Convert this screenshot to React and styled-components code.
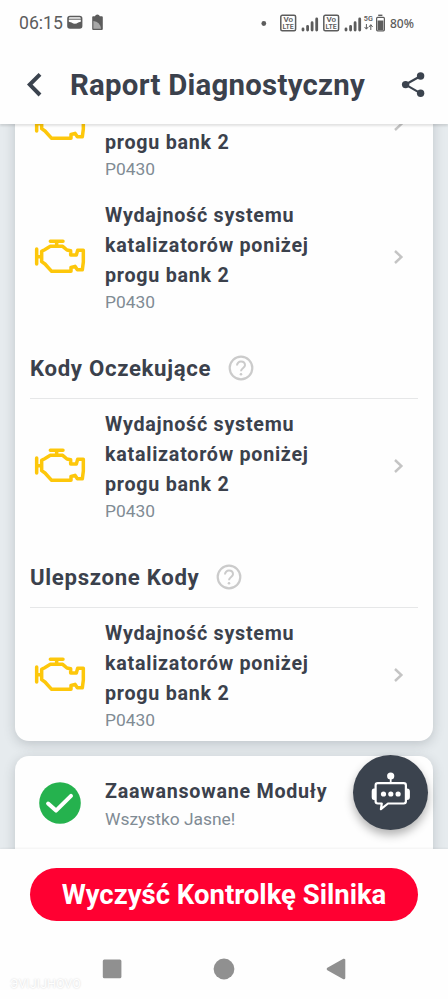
import React from 'react';
import styled, { createGlobalStyle } from 'styled-components';

const GlobalStyle = createGlobalStyle`
  * {
    box-sizing: border-box;
  }

  body {
    margin: 0;
    font-family: Roboto, "Liberation Sans", sans-serif;
    color: #3b414c;
    background: #ffffff;
  }
`;

const Screen = styled.div`
  display: flex;
  flex-direction: column;
  width: 448px;
  height: 999px;
  overflow: hidden;
  background: #fefefe;
`;

const StatusBar = styled.div`
  display: flex;
  align-items: center;
  flex: none;
  height: 46px;
  padding-left: 19px;
  color: #5c5c5c;
`;

const Clock = styled.span`
  width: 48px;
  font-size: 17.6px;
  line-height: 20px;
  padding-bottom: 1px;
`;

const StatusIcons = styled.svg`
  display: block;
  flex: none;
`;

const BatteryLevel = styled.span`
  margin-left: 4px;
  padding-top: 2px;
  font: 500 12px/16px "Noto Sans", sans-serif;
`;

const Header = styled.header`
  position: relative;
  z-index: 1;
  display: flex;
  align-items: center;
  flex: none;
  height: 78px;
  background: #fefefe;
  box-shadow: 0 2px 2px rgba(0, 0, 0, 0.11);
`;

const HeaderButton = styled.button`
  display: flex;
  justify-content: center;
  width: 70px;
  padding: 0;
  border: 0;
  background: none;
`;

const Title = styled.h1`
  flex: 1;
  margin: 0;
  font-size: 29.4px;
  font-weight: 700;
  line-height: 38px;
  letter-spacing: 0.25px;
  white-space: nowrap;
`;

const Content = styled.main`
  display: flex;
  flex-direction: column;
  gap: 15px;
  flex: none;
  height: 725px;
  padding: 0 15px;
  overflow: hidden;
  background: #e6ebee;
`;

const Card = styled.section`
  flex: none;
  margin-top: ${(props) => props.$scrolled ?? 0}px;
  padding: 0 15px ${(props) => props.$bottom ?? 0}px;
  border-radius: 14px;
  background: #fefefe;
  box-shadow: 0 3px 12px rgba(50, 60, 70, 0.22);
`;

const SectionHead = styled.div`
  display: flex;
  align-items: center;
  gap: 17px;
  height: 76px;
  padding-top: 15px;
  border-bottom: 1px solid #e6e7e8;
`;

const SectionTitle = styled.h2`
  margin: 0;
  font-size: 22.2px;
  font-weight: 700;
  line-height: 29px;
  letter-spacing: 0.68px;
`;

const Row = styled.div`
  display: flex;
  align-items: center;
  height: ${(props) => props.$height ?? 133}px;
`;

const RowIcon = styled.div`
  display: flex;
  justify-content: center;
  width: 59px;
  margin-right: 16px;
  padding-bottom: ${(props) => props.$bottom ?? 0}px;
`;

const RowBody = styled.div`
  flex: 1;
`;

const RowTitle = styled.div`
  max-width: 250px;
  font-size: 19.7px;
  font-weight: 700;
  line-height: 30px;
  letter-spacing: 0.74px;
`;

const RowNote = styled.div`
  color: #808b94;
  font-size: 17.4px;
  line-height: ${(props) => props.$line ?? 25}px;
`;

const RowArrow = styled.div`
  display: flex;
  width: 26px;
`;

const ChatButton = styled.button`
  position: absolute;
  z-index: 2;
  left: 353px;
  top: 755px;
  width: 75px;
  height: 75px;
  padding: 0;
  border: 0;
  border-radius: 50%;
  background: #3b434e;
  box-shadow: 0 5px 10px rgba(0, 0, 0, 0.3);
`;

const Footer = styled.footer`
  position: relative;
  z-index: 1;
  flex: none;
  height: 90px;
  padding: 19px 30px 0;
  background: #fefefe;
  box-shadow: 0 -1px 2px rgba(0, 0, 0, 0.05);
`;

const ClearButton = styled.button`
  display: block;
  width: 100%;
  height: 53px;
  padding: 0;
  border: 0;
  border-radius: 27px;
  color: #ffffff;
  background: #ff0032;
  font: 700 27.5px/52px Roboto, sans-serif;
  white-space: nowrap;
`;

const NavBar = styled.nav`
  position: relative;
  display: flex;
  justify-content: center;
  flex: none;
  height: 60px;
  padding-top: 18px;
`;

const Watermark = styled.span`
  position: absolute;
  left: 10px;
  top: 38px;
  color: #ffffff;
  font-size: 12px;
  line-height: 14px;
  letter-spacing: 0.3px;
  text-shadow: 0 0 2px rgba(0, 0, 0, 0.2);
`;

const EngineIcon = () => (
  <svg
    width="52"
    height="36"
    viewBox="102 147 156 108"
    fill="none"
    stroke="#fdc70b"
    strokeWidth="10.5"
    strokeLinecap="round"
    strokeLinejoin="round"
  >
    <path d="M151 154H189M170 155V168" />
    <path d="M110 177V222M111 200H123" />
    <path d="M125 184L134 179L151 169H188L201 180L212 182V195H229L233 181L250 181V216L247 239H232L225 229L213 232V244H155L135 222L125 215Z" />
  </svg>
);

const ArrowIcon = () => (
  <svg width="12" height="16" viewBox="0 0 12 16" fill="none" stroke="#c4c4c4" strokeWidth="2.4">
    <path d="M3 2L9.4 8L3 14" />
  </svg>
);

const HelpIcon = () => (
  <svg width="26" height="26" viewBox="0 0 26 26" fill="none" stroke="#cbcbcb" strokeWidth="2.2">
    <circle cx="13" cy="13" r="11.3" />
    <path d="M9 10.6C9 8.1 10.7 6.6 13 6.6S17 8.1 17 10.3C17 12.8 13 13.2 13 16.2" strokeWidth="2" />
    <circle cx="13" cy="19.2" r="1.3" fill="#cbcbcb" stroke="none" />
  </svg>
);

const CheckIcon = () => (
  <svg width="42" height="42" viewBox="0 0 42 42">
    <circle cx="21" cy="21" r="20.8" fill="#25b24e" />
    <path
      d="M9.1 21.6L17 28.6L32 13.8"
      fill="none"
      stroke="#ffffff"
      strokeWidth="4"
      strokeLinecap="round"
      strokeLinejoin="round"
    />
  </svg>
);

const BotIcon = () => (
  <svg width="75" height="75" viewBox="-0.5 0 75 75" fill="none" stroke="#ffffff">
    <circle cx="37.2" cy="21" r="3.6" fill="#ffffff" stroke="none" />
    <path d="M37.2 23V29" strokeWidth="1.8" />
    <path d="M22 33.5H20.5Q18.2 33.5 18.2 36.5V42Q18.2 45 20.5 45H22ZM52 33.5H53.5Q56.4 33.5 56.4 36.5V42Q56.4 45 53.5 45H52Z" fill="#ffffff" stroke="none" />
    <path
      d="M24.3 28.2H50.2Q52.4 28.2 52.4 30.4V46.3Q52.4 48.5 50.2 48.5H34.5L27.4 54.2L28.3 48.5H24.3Q22.1 48.5 22.1 46.3V30.4Q22.1 28.2 24.3 28.2Z"
      strokeWidth="2.2"
      strokeLinejoin="round"
    />
    <g fill="#ffffff" stroke="none">
      <circle cx="30" cy="39" r="2.6" />
      <circle cx="37.3" cy="39" r="2.6" />
      <circle cx="44.6" cy="39" r="2.6" />
    </g>
  </svg>
);

const BadgeText = styled.text`
  font: 600 7.4px Roboto, sans-serif;
`;

const Volte = ({ x }) => (
  <g transform={`translate(${x} 0)`}>
    <rect x="0.8" y="2.3" width="14.8" height="15.4" rx="1.5" fill="none" stroke="#5c5c5c" strokeWidth="1.5" />
    <BadgeText x="3.4" y="9.2" textLength="9.6" lengthAdjust="spacingAndGlyphs">Vo</BadgeText>
    <BadgeText x="2.6" y="16.2" textLength="11.2" lengthAdjust="spacingAndGlyphs">LTE</BadgeText>
    <path
      d="M23 17V15.9M27.6 17V13.3M32.1 17V9.7M36.7 17V5.9"
      stroke="#5c5c5c"
      strokeWidth="2.8"
      strokeLinecap="round"
    />
  </g>
);

const CodeRow = () => (
  <Row>
    <RowIcon><EngineIcon /></RowIcon>
    <RowBody>
      <RowTitle>Wydajność systemu katalizatorów poniżej progu bank 2</RowTitle>
      <RowNote $line={22}>P0430</RowNote>
    </RowBody>
    <RowArrow><ArrowIcon /></RowArrow>
  </Row>
);

const CodeSection = ({ title }) => (
  <>
    <SectionHead>
      <SectionTitle>{title}</SectionTitle>
      <HelpIcon />
    </SectionHead>
    <CodeRow />
  </>
);

const App = () => (
  <Screen>
    <GlobalStyle />
    <StatusBar>
      <Clock>06:15</Clock>
      <StatusIcons width="38" height="20" viewBox="0 0 38 20">
        <rect x="1" y="3.5" width="13.6" height="11.5" rx="2" fill="none" stroke="#5c5c5c" strokeWidth="1.6" />
        <path d="M1 6.2H14.6" stroke="#5c5c5c" />
        <path d="M1 8.5L4.5 9.5Q8 12 11.2 9.5L14.6 8.5V13.5Q14.6 15 13 15H2.6Q1 15 1 13.5Z" fill="#5c5c5c" />
        <path d="M25.2 16V4Q25.2 3.2 26.2 3.2H28Q28.4 1.4 30.4 1.4T32.8 3.2H34.8Q35.8 3.2 35.8 4.2V16Q35.8 17 34.8 17H26.2Q25.2 17 25.2 16Z" fill="#5c5c5c" />
        <path d="M26.4 8Q33 8.5 34 15.8H26.4Z" fill="#a8a8a8" />
      </StatusIcons>
      <StatusIcons width="281" height="21" viewBox="105 0 281 21" fill="#5c5c5c">
        <circle cx="263.8" cy="10.5" r="2.4" />
        <Volte x={280} />
        <Volte x={323} />
        <BadgeText x="363.8" y="8.4" textLength="9" lengthAdjust="spacingAndGlyphs">5G</BadgeText>
        <path d="M366.4 11V16M364.6 14L366.4 16.2L368.2 14M370.8 17V12M369 14L370.8 11.6L372.6 14" fill="none" stroke="#5c5c5c" />
        <path d="M378.2 2.3H382.4" stroke="#5c5c5c" strokeWidth="1.4" />
        <rect x="376.6" y="4.4" width="7.8" height="13.4" rx="1" fill="none" stroke="#5c5c5c" strokeWidth="1.2" />
        <rect x="377.6" y="7.5" width="5.8" height="9.5" />
      </StatusIcons>
      <BatteryLevel>80%</BatteryLevel>
    </StatusBar>
    <Header>
      <HeaderButton aria-label="Wstecz">
        <svg width="20" height="26" viewBox="0 0 20 26" fill="none" stroke="#3b434e" strokeWidth="4">
          <path d="M15 2.3L4.8 12.6L15 23" />
        </svg>
      </HeaderButton>
      <Title>Raport Diagnostyczny</Title>
      <HeaderButton aria-label="Udostępnij">
        <svg width="24" height="26" viewBox="0 0 24 26" fill="#3b434e">
          <path d="M19.7 4L4.5 12.6L19.7 21.4" fill="none" stroke="#3b434e" strokeWidth="2.2" />
          <circle cx="19.6" cy="4" r="3.7" />
          <circle cx="4.6" cy="12.6" r="3.7" />
          <circle cx="19.6" cy="21.3" r="3.7" />
        </svg>
      </HeaderButton>
    </Header>
    <Content>
      <Card $scrolled={-67}>
        <CodeRow />
        <CodeRow />
        <CodeSection title="Kody Oczekujące" />
        <CodeSection title="Ulepszone Kody" />
      </Card>
      <Card $bottom={36}>
        <Row $height={97}>
          <RowIcon $bottom={3}><CheckIcon /></RowIcon>
          <RowBody>
            <RowTitle>Zaawansowane Moduły</RowTitle>
            <RowNote>Wszystko Jasne!</RowNote>
          </RowBody>
        </Row>
      </Card>
    </Content>
    <ChatButton aria-label="Czat"><BotIcon /></ChatButton>
    <Footer>
      <ClearButton>Wyczyść Kontrolkę Silnika</ClearButton>
    </Footer>
    <NavBar>
      <Watermark>ЭVIJIJHOVO</Watermark>
      <svg width="248" height="24" viewBox="100 0 248 24" fill="#909090">
        <rect x="102.8" y="2.6" width="18.6" height="18.6" rx="1.5" />
        <circle cx="224" cy="12" r="10.4" />
        <path d="M328 12L344 3V21Z" stroke="#909090" strokeWidth="2.6" strokeLinejoin="round" />
      </svg>
    </NavBar>
  </Screen>
);

export default App;
